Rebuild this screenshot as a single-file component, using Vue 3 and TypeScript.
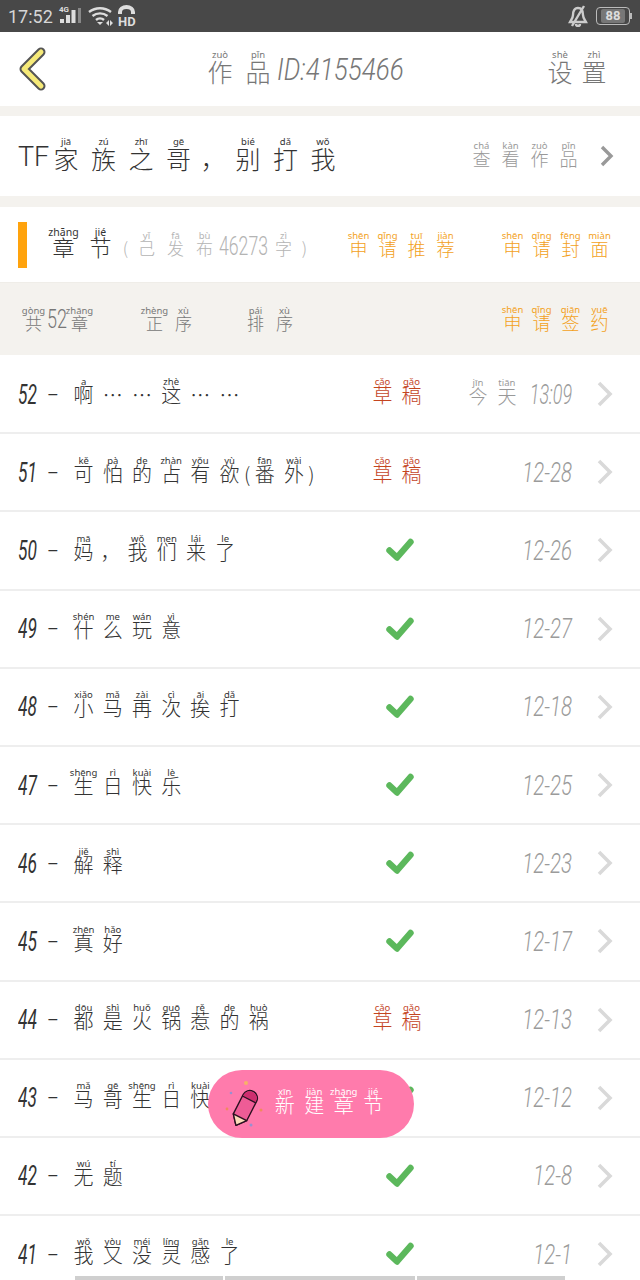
<template>
  <div class="page">
    <div class="status">
      <span class="clock">17:52</span>
      <svg class="net" width="90" height="24" viewBox="0 0 90 24">
        <text x="3" y="8" class="net-g">4G</text>
        <rect x="4" y="15" width="4" height="4" fill="#ddd" />
        <rect x="10" y="11" width="4" height="8" fill="#ddd" />
        <rect x="15.500" y="6" width="4" height="13" fill="#ddd" />
        <rect x="22" y="4" width="3" height="15" fill="#888" />
        <path d="M33 8a18 18 0 0 1 22 0M36.500 12a12 12 0 0 1 15 0M40 16a6 6 0 0 1 8 0" fill="none" stroke="#ddd" stroke-width="2.400" />
        <path d="M44 21l-3-3h6z" fill="#ddd" />
        <path d="M50 19l3-3v6zM57 19l-3-3v6z" fill="#ddd" />
        <path d="M62 10V8a8.500 7 0 0 1 17 0v2h-4V8a4.500 3 0 0 0-9 0v2z" fill="#ddd" />
        <text x="62" y="21.500" class="net-hd">HD</text>
      </svg>
      <span class="grow"></span>
      <svg width="20" height="22" viewBox="0 0 20 22">
        <path d="M10 3c-4 0-5 4-5 7 0 3-2 5-3 7h16c-1-2-3-4-3-7 0-3-1-7-5-7zM8 19a2 2 0 0 0 4 0M16 1L4 21" fill="none" stroke="#ccc" stroke-width="2.400" />
      </svg>
      <div class="battery"><span class="level">88</span></div>
    </div>

    <header class="topbar">
      <svg class="back" width="30" height="44" viewBox="0 0 30 44">
        <path d="M23 5L6 22l17 17" fill="none" stroke="#555" stroke-width="9" stroke-linecap="round" stroke-linejoin="round" />
        <path d="M23 5L6 22l17 17" fill="none" stroke="#f6ea78" stroke-width="5" stroke-linecap="round" stroke-linejoin="round" />
      </svg>
      <Py class="top-title" text="作:zuò 品:pǐn" />
      <span class="top-id">ID:4155466</span>
      <span class="grow"></span>
      <Py class="top-set" text="设:shè 置:zhì" />
    </header>

    <section class="work">
      <span class="work-tf">TF</span>
      <Py class="work-name" text="家:jiā 族:zú 之:zhī 哥:gē ， 别:bié 打:dǎ 我:wǒ" />
      <span class="grow"></span>
      <Py class="work-view" text="查:chá 看:kàn 作:zuò 品:pǐn" />
      <svg class="work-arrow" width="14" height="22" viewBox="0 0 14 22">
        <path d="M2 2l9 9-9 9" fill="none" stroke="#999" stroke-width="3.400" />
      </svg>
    </section>

    <section class="chapters">
      <i class="mark"></i>
      <Py class="chapters-name" text="章:zhāng 节:jié" />
      <span class="published">
        <Py class="soft" text="( 己:yǐ 发:fā 布:bù" /><span class="slim soft-num">46273</span><Py class="soft" text="字:zì )" />
      </span>
      <span class="grow"></span>
      <Py class="orange apply-a" text="申:shēn 请:qǐng 推:tuī 荐:jiàn" />
      <Py class="orange" text="申:shēn 请:qǐng 封:fēng 面:miàn" />
    </section>

    <section class="tools">
      <span class="tool-count">
        <Py class="tool" text="共:gòng" /><span class="slim tool-num">52</span><Py class="tool" text="章:zhāng" />
      </span>
      <Py class="tool tool-order" text="正:zhèng 序:xù" />
      <Py class="tool tool-sort" text="排:pái 序:xù" />
      <span class="grow"></span>
      <Py class="orange" text="申:shēn 请:qǐng 签:qiān 约:yuē" />
    </section>

    <ul class="list">
      <li v-for="row in rows" :key="row.no" class="row">
        <span class="no"><span class="slim no-num">{{ row.no }}</span><span class="no-dash">–</span></span>
        <Py class="row-title" :text="row.title" />
        <span class="state">
          <Py v-if="row.draft" class="draft" text="草:cǎo 稿:gǎo" />
          <svg v-else width="28" height="24" viewBox="0 0 28 24">
            <path d="M3.500 12.500l7.500 7L24.500 4" fill="none" stroke="#5cb85c" stroke-width="6.400" stroke-linejoin="round" stroke-linecap="round" />
          </svg>
        </span>
        <span class="when">
          <Py v-if="row.today" class="today" text="今:jīn 天:tiān" />
          <span class="slim date" :class="{ clock24: row.today }">{{ row.date }}</span>
        </span>
        <svg class="row-arrow" width="18" height="26" viewBox="0 0 18 26">
          <path d="M3 2l11 11L3 24" fill="none" stroke="#d9d9d9" stroke-width="3.600" />
        </svg>
      </li>
    </ul>

    <button class="fab">
      <svg width="40" height="50" viewBox="0 0 40 50">
        <circle cx="22" cy="4" r="2" fill="#f7b267" />
        <circle cx="7" cy="14" r="1.300" fill="#9a8fd0" />
        <circle cx="3" cy="30" r="1.400" fill="#f08a5d" />
        <circle cx="37" cy="31" r="1.500" fill="#f08a5d" />
        <circle cx="27" cy="46" r="1.500" fill="#9a8fd0" />
        <g transform="translate(21 28.500) rotate(27)">
          <path d="M-7.500-11a7.500 7 0 0 1 15 0V11L0 20-7.500 11z" fill="#ee5c96" stroke="#2b1020" stroke-width="1.400" stroke-linejoin="round" />
          <path d="M-6.800-11a6.800 6.400 0 0 1 13.600 0V-9H-6.800z" fill="#cf2e6f" />
          <path d="M-7.500-9H7.500" stroke="#2b1020" stroke-width="1.200" />
          <path d="M-7.500 11H7.500L0 20z" fill="#fbdcb8" stroke="#2b1020" stroke-width="1.400" stroke-linejoin="round" />
        </g>
      </svg>
      <Py class="fab-text" text="新:xīn 建:jiàn 章:zhāng 节:jié" />
    </button>

    <div class="hint">
      <i class="hint-a"></i>
      <i class="hint-b"></i>
      <i class="hint-c"></i>
    </div>
  </div>
</template>

<script setup lang="ts">
import { h } from 'vue'

// "字:pinyin" gives a cell with reading, a bare token gives a cell without one
const Py = (props: { text: string }) =>
  h(
    'span',
    { class: 'py' },
    props.text.split(' ').map((token) => {
      const [han, pinyin] = token.split(':')
      let kind = 'cell'
      if (han === '(' || han === ')') kind = 'cell narrow'
      if (han === '，') kind = 'cell comma'
      return h('span', { class: kind }, [
        h('span', { class: 'rt' }, pinyin || ''),
        h('span', { class: 'hz' }, han)
      ])
    })
  )
Py.props = ['text']

interface Row {
  no: number
  title: string
  date: string
  draft?: boolean
  today?: boolean
}

const rows: Row[] = [
  { no: 52, title: '啊:a … … 这:zhè … …', date: '13:09', draft: true, today: true },
  { no: 51, title: '可:kě 怕:pà 的:de 占:zhàn 有:yǒu 欲:yù ( 番:fān 外:wài )', date: '12-28', draft: true },
  { no: 50, title: '妈:mā ， 我:wǒ 们:men 来:lái 了:le', date: '12-26' },
  { no: 49, title: '什:shén 么:me 玩:wán 意:yì', date: '12-27' },
  { no: 48, title: '小:xiǎo 马:mǎ 再:zài 次:cì 挨:āi 打:dǎ', date: '12-18' },
  { no: 47, title: '生:shēng 日:rì 快:kuài 乐:lè', date: '12-25' },
  { no: 46, title: '解:jiě 释:shì', date: '12-23' },
  { no: 45, title: '真:zhēn 好:hǎo', date: '12-17' },
  { no: 44, title: '都:dōu 是:shì 火:huǒ 锅:guō 惹:rě 的:de 祸:huò', date: '12-13', draft: true },
  { no: 43, title: '马:mǎ 哥:gē 生:shēng 日:rì 快:kuài', date: '12-12' },
  { no: 42, title: '无:wú 题:tí', date: '12-8' },
  { no: 41, title: '我:wǒ 又:yòu 没:méi 灵:líng 感:gǎn 了:le', date: '12-1' }
]
</script>

<style>
html,
body {
  margin: 0;
  background: #fff;
}

.py {
  display: inline-flex;
  align-items: flex-end;
  font-family: 'Noto Sans CJK SC', sans-serif;
  font-weight: 300;
  --pitch: 29px;
  --size: 18px;
  --rt: 9.5px;
  --narrow: 6px;
  font-size: var(--size);
}

.py .cell {
  display: inline-flex;
  flex-direction: column;
  align-items: center;
  width: var(--pitch);
  flex: none;
}

.py .cell.narrow {
  width: var(--narrow);
}

.py .cell.comma {
  width: calc(var(--pitch) * 0.85);
}

.py .rt {
  height: 10px;
  font-size: var(--rt);
  line-height: 10px;
  white-space: nowrap;
  font-family: 'Noto Sans', sans-serif;
  font-weight: 400;
}

.py .hz {
  margin-top: -3px;
  line-height: 1.12;
}
</style>

<style scoped>
.page {
  position: relative;
  width: 640px;
  height: 1280px;
  overflow: hidden;
  background: #fff;
  font-family: 'Noto Sans CJK SC', sans-serif;
}

.grow {
  flex: 1;
}

/* the numbers of the reference are tall and narrow */
.slim {
  display: inline-block;
  font-family: Roboto, sans-serif;
  font-weight: 300;
  white-space: nowrap;
  transform-origin: left center;
}

.status {
  display: flex;
  align-items: center;
  height: 32px;
  padding: 0 8px;
  box-sizing: border-box;
  background: #484848;
  color: #d6d6d6;
}

.clock {
  font-family: Roboto, sans-serif;
  font-size: 18px;
  margin-right: 3px;
}

.net-g {
  font-family: Roboto, sans-serif;
  font-size: 8px;
  font-weight: 700;
  fill: #ddd;
}

.net-hd {
  font-family: Roboto, sans-serif;
  font-size: 13px;
  font-weight: 700;
  fill: #ddd;
}

.battery {
  position: relative;
  display: flex;
  align-items: center;
  justify-content: center;
  width: 32px;
  height: 16px;
  margin: 0 2px 0 8px;
  border: 1px solid #bbb;
  border-radius: 4px;
}

.battery::after {
  content: '';
  position: absolute;
  right: -3px;
  top: 5px;
  width: 2px;
  height: 6px;
  background: #bbb;
}

.level {
  padding: 0 5px;
  background: #777;
  border-radius: 2px;
  color: #ddd;
  font-family: Roboto, sans-serif;
  font-size: 13px;
  font-weight: 700;
  line-height: 14px;
}

.topbar {
  display: flex;
  align-items: center;
  height: 74px;
  padding: 0 29px 0 18px;
  border-bottom: 10px solid #f4f2ee;
  color: #777;
}

.back {
  margin-right: 153px;
}

.top-title {
  --pitch: 38px;
  --size: 25px;
  margin-top: -4px;
}

.top-id {
  font-family: Roboto, sans-serif;
  font-weight: 300;
  font-size: 31px;
  font-style: italic;
  white-space: nowrap;
  transform: scaleX(0.84);
  transform-origin: left center;
  margin-top: 1px;
}

.top-set {
  --pitch: 34px;
  --size: 25px;
  margin-top: -4px;
}

.work {
  display: flex;
  align-items: center;
  height: 80px;
  padding: 0 26px 0 18px;
  border-bottom: 11px solid #f4f2ee;
}

.work-tf {
  font-family: Roboto, sans-serif;
  font-size: 27px;
  font-weight: 300;
  color: #333;
  margin-top: 2px;
  margin-right: -2px;
}

.work-name {
  --pitch: 37.5px;
  --size: 25px;
  margin-top: -4px;
  color: #333;
}

.work-view {
  --pitch: 29px;
  --size: 18px;
  color: #999;
  margin: -2px 17px 0 0;
}

.chapters {
  display: flex;
  align-items: center;
  height: 76px;
  padding: 0 26px 0 18px;
  border-bottom: 1px solid #efede8;
  box-sizing: border-box;
}

.mark {
  width: 9px;
  height: 46px;
  margin-right: 18px;
  background: #ffa30d;
}

.chapters-name {
  --pitch: 37px;
  --size: 22px;
  --rt: 10.5px;
  color: #333;
  margin-top: -4px;
}

.published {
  display: flex;
  align-items: flex-end;
  color: #b4b4b4;
}

.soft {
  --pitch: 29px;
  --size: 17px;
  --narrow: 13px;
  color: #b4b4b4;
}

.soft-num {
  width: 50px;
  font-size: 26px;
  line-height: 24px;
  transform: scaleX(0.68);
}

.orange {
  --pitch: 29px;
  --size: 18px;
  color: #f3a11c;
}

.apply-a {
  margin-right: 38px;
}

.tools {
  display: flex;
  align-items: center;
  height: 72px;
  padding: 0 26px 0 23px;
  background: #f4f2ee;
}

.tool {
  --pitch: 29px;
  --size: 17px;
  color: #777;
}

.tool-count {
  display: flex;
  align-items: flex-end;
  width: 117px;
}

.tool-count .tool {
  --pitch: 21px;
}

.tool-num {
  width: 22px;
  margin-left: 3px;
  font-size: 25px;
  line-height: 24px;
  color: #777;
  transform: scaleX(0.72);
}

.tool-order {
  margin-right: 43px;
}

.list {
  margin: 1px 0 0;
  padding: 0;
  list-style: none;
}

.row {
  display: grid;
  grid-template-columns: 54px 298px 60px 142px 1fr;
  align-items: center;
  height: 78.2px;
  padding-left: 18px;
  box-sizing: border-box;
  border-bottom: 2px solid #eeeeee;
  color: #333;
}

.no {
  display: flex;
  align-items: center;
}

.no-num {
  width: 29px;
  font-size: 28px;
  font-weight: 400;
  font-style: italic;
  transform: scaleX(0.62);
}

.no-dash {
  font-family: Roboto, sans-serif;
  font-size: 18px;
}

.row-title {
  --pitch: 29.2px;
  --size: 20px;
  margin-top: -4px;
  margin-left: -3px;
}

.state {
  display: flex;
  justify-content: center;
}

.draft {
  --pitch: 29px;
  --size: 20px;
  color: #c4451f;
  margin: -4px 0 0 -6px;
}

.when {
  display: flex;
  align-items: center;
  justify-content: flex-end;
}

.today {
  --pitch: 29px;
  --size: 19px;
  color: #999;
  margin: -4px -15.5px 0 0;
}

.date {
  font-size: 28px;
  font-style: italic;
  color: #9b9b9b;
  transform: scaleX(0.73);
  transform-origin: right center;
}

.date.clock24 {
  transform: scaleX(0.64);
}

.row-arrow {
  margin-left: 24px;
}

.fab {
  position: absolute;
  left: 208px;
  top: 1070px;
  display: flex;
  align-items: center;
  width: 206px;
  height: 68px;
  padding: 0 0 0 16px;
  box-sizing: border-box;
  border: 0;
  border-radius: 34px;
  background: #ff7bac;
  color: #fff;
}

.fab-text {
  --pitch: 29.5px;
  --size: 20px;
  margin: -4px 0 0 6px;
}

.hint {
  position: absolute;
  left: 75px;
  bottom: 0;
  display: flex;
  gap: 2px;
}

.hint i {
  display: block;
  height: 4px;
  background: #cfcfcf;
}

.hint-a {
  width: 148px;
}

.hint-b {
  width: 190px;
}

.hint-c {
  width: 148px;
}
</style>
